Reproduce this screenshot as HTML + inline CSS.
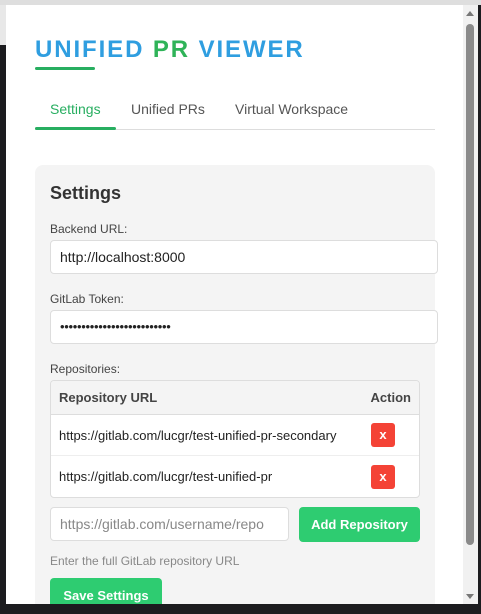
<!DOCTYPE html>
<html><head><style>
*{box-sizing:border-box;margin:0;padding:0}
body{width:481px;height:614px;overflow:hidden;background:#1c1c1f;font-family:"Liberation Sans",sans-serif;position:relative}
.top{position:absolute;left:0;top:0;width:481px;height:5px;background:#dedede}
.lstrip{position:absolute;left:0;top:5px;width:6px;height:40px;background:#e8e8e8}
.pop{position:absolute;left:6px;top:5px;width:472px;height:599px;background:#fff;overflow:hidden}
.sb{position:absolute;left:457px;top:0;width:15px;height:599px;background:#f1f1f1}
.thumb{position:absolute;left:3px;top:19px;width:8px;height:521px;background:#8a8a8a;border-radius:4px}
.au{position:absolute;left:3px;top:6px;width:0;height:0;border-left:4px solid transparent;border-right:4px solid transparent;border-bottom:5px solid #777}
.ad{position:absolute;left:3px;top:589px;width:0;height:0;border-left:4px solid transparent;border-right:4px solid transparent;border-top:5px solid #777}
.title{position:absolute;left:29px;top:31px;font-size:24px;font-weight:bold;color:#2f9ee0;letter-spacing:1.9px;white-space:nowrap}
.title span{color:#2fb358}
.tu{position:absolute;left:29px;top:62px;width:60px;height:3px;background:#27ae60;border-radius:2px}
.tabs{position:absolute;left:29px;top:96px;font-size:14px;color:#555}
.tab{position:absolute;white-space:nowrap}
.tline{position:absolute;left:29px;top:124px;width:400px;height:1px;background:#ddd}
.tact{position:absolute;left:29px;top:122px;width:81px;height:3px;background:#27ae60;border-radius:2px}
.card{position:absolute;left:29px;top:160px;width:400px;height:460px;background:#f4f4f4;border-radius:8px}
.h{position:absolute;left:15px;top:18px;font-size:18px;font-weight:bold;color:#333}
.lbl{position:absolute;left:15px;font-size:12px;color:#444}
.inp{position:absolute;left:15px;width:388px;height:34px;background:#fff;border:1px solid #ddd;border-radius:4px;font-size:14px;padding:8px 9px;color:#222}
table{position:absolute;left:15px;top:215px;width:370px;border-collapse:separate;border-spacing:0;border:1px solid #ddd;border-radius:4px;background:#fff;font-size:13px;overflow:hidden}
th{background:#f4f4f4;text-align:left;height:34px;padding:0 8px;font-weight:bold;color:#444;font-size:13px;border-bottom:1px solid #ddd}
td{height:41px;padding:0 8px;color:#222}
tbody tr:first-child td{border-bottom:1px solid #eee}
.x{display:inline-block;width:24px;height:24px;background:#f44336;color:#fff;border-radius:3px;text-align:center;line-height:24px;font-weight:bold;font-size:13px}
.btn{position:absolute;background:#2ecc71;color:#fff;border-radius:4px;font-size:13px;text-align:center}
</style></head><body>
<div class="top"></div><div class="lstrip"></div>
<div class="pop">
<div class="title">UNIFIED <span>PR</span> VIEWER</div>
<div class="tu"></div>
<div class="tabs"><div class="tab" style="left:15px;color:#27ae60">Settings</div><div class="tab" style="left:96px">Unified PRs</div><div class="tab" style="left:200px">Virtual Workspace</div></div>
<div class="tline"></div><div class="tact"></div>
<div class="card">
<div class="h">Settings</div>
<div class="lbl" style="top:57px">Backend URL:</div>
<div class="inp" style="top:75px">http://localhost:8000</div>
<div class="lbl" style="top:127px">GitLab Token:</div>
<div class="inp" style="top:145px;font-size:13px;letter-spacing:-0.3px">••••••••••••••••••••••••••</div>
<div class="lbl" style="top:197px">Repositories:</div>
<table><thead><tr><th>Repository URL</th><th style="text-align:right;width:60px">Action</th></tr></thead>
<tbody><tr><td>https://gitlab.com/lucgr/test-unified-pr-secondary</td><td style="padding-left:12px"><span class="x">x</span></td></tr>
<tr><td>https://gitlab.com/lucgr/test-unified-pr</td><td style="padding-left:12px"><span class="x">x</span></td></tr></tbody></table>
<div class="inp" style="top:342px;width:239px;color:#888">https://gitlab.com/username/repo</div>
<div class="btn" style="left:264px;top:342px;width:121px;height:35px;line-height:35px;font-weight:bold">Add Repository</div>
<div class="lbl" style="top:389px;color:#888">Enter the full GitLab repository URL</div>
<div class="btn" style="left:15px;top:413px;width:112px;height:40px;line-height:36px;font-weight:bold">Save Settings</div>
</div>
<div class="sb"><div class="au"></div><div class="thumb"></div><div class="ad"></div></div>
</div>
</body></html>
